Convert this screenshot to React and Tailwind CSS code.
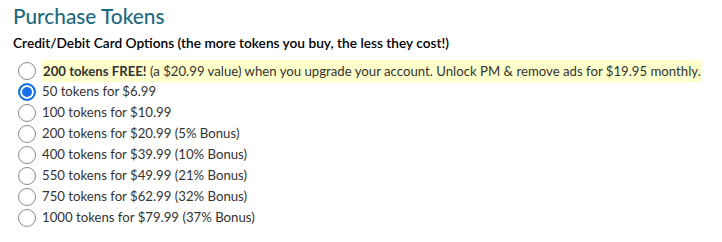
import React, { useState } from 'react';

const options = [
  { id: 50, label: '50 tokens for $6.99' },
  { id: 100, label: '100 tokens for $10.99' },
  { id: 200, label: '200 tokens for $20.99 (5% Bonus)' },
  { id: 400, label: '400 tokens for $39.99 (10% Bonus)' },
  { id: 550, label: '550 tokens for $49.99 (21% Bonus)' },
  { id: 750, label: '750 tokens for $62.99 (32% Bonus)' },
  { id: 1000, label: '1000 tokens for $79.99 (37% Bonus)' },
];

function Radio({ checked, onChange }) {
  return (
    <input
      type="radio"
      name="tokens"
      checked={checked}
      onChange={onChange}
      className="appearance-none w-[18px] h-[18px] m-0 shrink-0 rounded-full border border-[#8a8a8a] bg-white checked:border-2 checked:border-[#1670e8] checked:bg-[#1670e8] checked:shadow-[inset_0_0_0_2px_white]"
    />
  );
}

export default function App() {
  const [picked, setPicked] = useState(50);

  return (
    <div className="bg-white w-[722px] h-[242px] pl-[13px] pt-[1px] text-[#333] font-['Lato','Open_Sans',sans-serif]">
      <h1 className="text-[20.8px] leading-[30px] font-medium text-[#1d6a7e]">Purchase Tokens</h1>
      <p className="mt-[2px] text-[13.7px] leading-[20px] font-semibold text-black">
        Credit/Debit Card Options (the more tokens you buy, the less they cost!)
      </p>

      <div className="mt-[7px] pl-[5px] flex flex-col text-[13.2px]">
        <label className="flex items-center gap-[6px] h-[21px]">
          <Radio checked={picked === 'free'} onChange={() => setPicked('free')} />
          <span className="bg-[#ffffcc] px-[1px] leading-[22px]">
            <b className="font-bold">200 tokens FREE!</b> (a $20.99 value) when you upgrade your account. Unlock PM &amp; remove ads for $19.95 monthly.
          </span>
        </label>
        {options.map((o) => (
          <label key={o.id} className="flex items-center gap-[6px] h-[21px]">
            <Radio checked={picked === o.id} onChange={() => setPicked(o.id)} />
            <span>{o.label}</span>
          </label>
        ))}
      </div>
    </div>
  );
}
